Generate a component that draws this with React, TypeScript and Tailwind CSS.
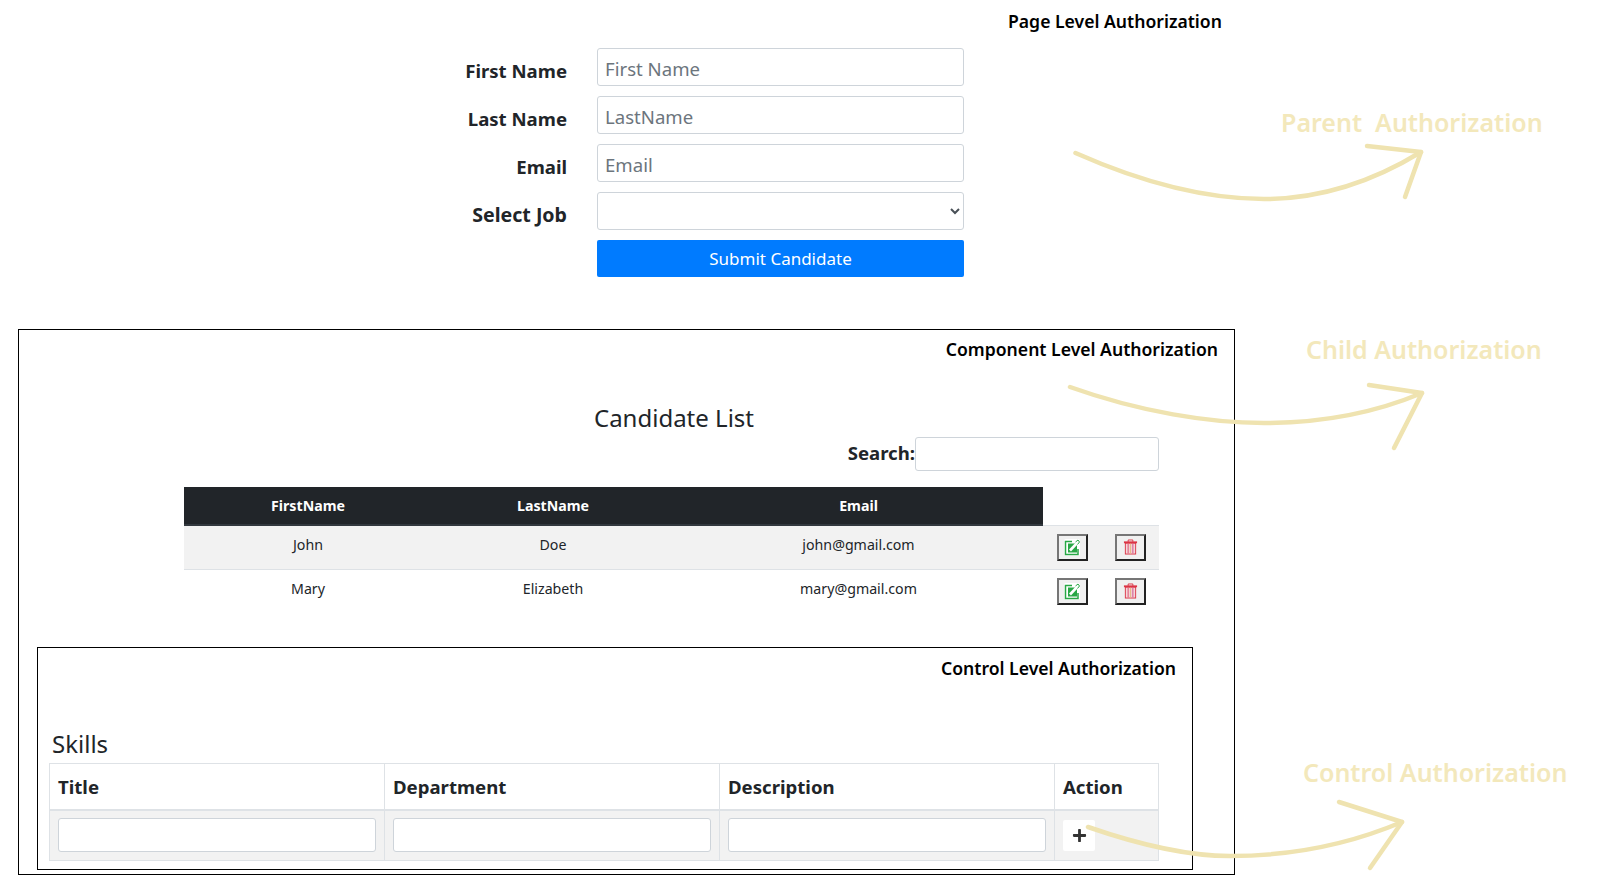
import { FaPlus } from "react-icons/fa";

const candidates = [
  { first: "John", last: "Doe", email: "john@gmail.com" },
  { first: "Mary", last: "Elizabeth", email: "mary@gmail.com" },
];

const formRows = [
  { label: "First Name", placeholder: "First Name" },
  { label: "Last Name", placeholder: "LastName" },
  { label: "Email", placeholder: "Email" },
];

const inputClass =
  "h-[38px] w-[367px] rounded-[3px] border border-[#ced4da] bg-white pt-[3px] pr-2 pl-[7px] text-[18.6px] text-[#495057] placeholder:text-[#6c757d]";

const labelClass = "h-[38px] w-[567px] pt-[4px] text-right text-[18.6px] leading-[38px] font-bold";

function ActionButton({ children }: { children: React.ReactNode }) {
  return (
    <button className="flex h-[27px] w-[31px] items-center justify-center border-2 border-t-[#767676] border-r-[#222] border-b-[#222] border-l-[#767676] bg-[#f0f0f0]">
      {children}
    </button>
  );
}

function EditIcon() {
  return (
    <svg width="17" height="17" viewBox="0 0 17 17" fill="none">
      <rect x="0" y="0" width="16" height="17" rx="2" fill="#fff" />
      <path d="M8 2.5 H1.5 V15.5 H14 V10" stroke="#28a745" strokeWidth="1.5" />
      <rect x="4" y="4.5" width="9" height="9" fill="#28a745" />
      <path d="M6 11.5 L14 3" stroke="#fff" strokeWidth="2.6" />
      <path d="M11.5 3 L14 1 L15.5 3 L13.5 5.5" stroke="#28a745" strokeWidth="1" />
    </svg>
  );
}

function TrashIcon() {
  return (
    <svg width="15" height="16" viewBox="0 0 16 17" fill="none">
      <path d="M5.5 3 V1 H10.5 V3" stroke="#dc3545" strokeWidth="1" />
      <rect x="1" y="2.5" width="14" height="2" fill="#dc3545" />
      <rect x="2.5" y="4.5" width="11" height="11.5" stroke="#dc3545" strokeWidth="1" fill="#f5d6da" />
      <path d="M5.5 5 V15.5" stroke="#e0708a" strokeWidth="1.4" />
      <path d="M8 5 V15.5" stroke="#e8b98a" strokeWidth="1.4" />
      <path d="M10.5 5 V15.5" stroke="#d873a0" strokeWidth="1.4" />
    </svg>
  );
}

function Arrows() {
  // hand drawn annotation arrows over the page
  return (
    <svg className="pointer-events-none absolute top-0 left-0" width="1611" height="885" fill="none" stroke="#efe3b0" strokeWidth="4.5" strokeLinecap="round" strokeLinejoin="round">
      <path d="M1075.5 153 C1150 186 1210 199 1264 199 C1320 199 1372 182 1421 152" />
      <path d="M1367 146 L1421 152 L1405 197" />
      <path d="M1070 387 C1140 412 1210 423 1264 423 C1320 423 1372 414 1422 393" />
      <path d="M1369 385 L1422 393 L1394 448" />
      <path d="M1088 827 C1140 845 1190 856 1230 856 C1290 856 1350 844 1402 822" />
      <path d="M1339 802 L1402 822 L1370 868" />
    </svg>
  );
}

export default function App() {
  return (
    <div className="relative h-[885px] w-[1611px] overflow-hidden bg-white font-['Noto_Sans',sans-serif] text-[#212529]">
      {/* Page level form */}
      <div className="pt-[9px]">
        <div className="ml-[1008px] text-[17.6px] leading-[24px] font-semibold whitespace-nowrap text-black">Page Level Authorization</div>
        <div className="mt-[15px] flex flex-col gap-[10px]">
          {formRows.map((row) => (
            <div key={row.label} className="flex h-[38px]">
              <label className={labelClass}>{row.label}</label>
              <input className={`ml-[30px] ${inputClass}`} placeholder={row.placeholder} />
            </div>
          ))}
          <div className="flex h-[38px]">
            <label className="h-[38px] w-[567px] pt-[4px] text-right text-[19.6px] leading-[38px] font-bold">Select Job</label>
            <select className={`ml-[30px] ${inputClass}`}></select>
          </div>
          <div className="flex">
            <button className="ml-[597px] h-[37px] w-[367px] rounded-[2px] bg-[#007bff] text-[17px] text-white">Submit Candidate</button>
          </div>
        </div>
      </div>

      {/* Component level */}
      <div className="mt-[52px] ml-[18px] h-[546px] w-[1217px] border border-black">
        <div className="pt-[7px] pr-[16px] text-right text-[17.6px] leading-[24px] font-semibold text-black">Component Level Authorization</div>
        <div className="mt-[39px] ml-[165px] w-[975px]">
          <div className="pl-[5px] text-center text-[24px] leading-[36px]">Candidate List</div>
          <div className="mt-[1px] flex items-center justify-end">
            <label className="pb-[2px] text-[18.6px] font-bold">Search:</label>
            <input className="h-[34px] w-[244px] rounded-[3px] border border-[#ced4da] bg-white" />
          </div>
          <table className="mt-[16px] w-[975px] table-fixed border-collapse text-center text-[14.2px]">
            <colgroup>
              <col className="w-[248px]" />
              <col className="w-[242px]" />
              <col className="w-[369px]" />
              <col className="w-[58px]" />
              <col className="w-[58px]" />
            </colgroup>
            <thead>
              <tr className="h-[38px]">
                {["FirstName", "LastName", "Email"].map((h) => (
                  <th key={h} className="border-b-2 border-[#32383e] bg-[#212529] font-bold text-white">{h}</th>
                ))}
                <th colSpan={2} className="border-b border-[#dee2e6]"></th>
              </tr>
            </thead>
            <tbody>
              {candidates.map((c, i) => (
                <tr key={c.email} className={i === 0 ? "h-[44px] border-b border-[#dee2e6] bg-[#f2f2f2]" : "h-[44px]"}>
                  <td className="pb-[5px]">{c.first}</td>
                  <td className="pb-[5px]">{c.last}</td>
                  <td className="pb-[5px]">{c.email}</td>
                  <td>
                    <div className="flex justify-center pl-[1px]">
                      <ActionButton>
                        <EditIcon />
                      </ActionButton>
                    </div>
                  </td>
                  <td>
                    <div className="flex justify-center pl-[1px]">
                      <ActionButton>
                        <TrashIcon />
                      </ActionButton>
                    </div>
                  </td>
                </tr>
              ))}
            </tbody>
          </table>
        </div>

        {/* Control level */}
        <div className="mt-[34px] ml-[18px] h-[223px] w-[1156px] border border-black">
          <div className="pt-[8px] pr-[16px] text-right text-[17.6px] leading-[24px] font-semibold text-black">Control Level Authorization</div>
          <div className="mt-[46px] ml-[14px] text-[24px] leading-[36px]">Skills</div>
          <table className="mt-[1px] ml-[11px] w-[1109px] table-fixed border-collapse text-left text-[18.6px]">
            <colgroup>
              <col className="w-[335px]" />
              <col className="w-[335px]" />
              <col className="w-[335px]" />
              <col className="w-[104px]" />
            </colgroup>
            <thead>
              <tr className="h-[46px]">
                {["Title", "Department", "Description", "Action"].map((h) => (
                  <th key={h} className="border border-b-2 border-[#dee2e6] px-2 pt-[2px] font-bold">{h}</th>
                ))}
              </tr>
            </thead>
            <tbody>
              <tr className="h-[51px] bg-[#f2f2f2]">
                {[0, 1, 2].map((n) => (
                  <td key={n} className="border border-[#dee2e6] px-2">
                    <input className="block h-[34px] w-[318px] rounded-[3px] border border-[#ced4da] bg-white" />
                  </td>
                ))}
                <td className="border border-[#dee2e6] px-2">
                  <button className="flex h-[31px] w-[32px] items-center justify-center rounded-[2px] bg-white text-[#333]">
                    <FaPlus size={15} />
                  </button>
                </td>
              </tr>
            </tbody>
          </table>
        </div>
      </div>

      {/* Annotations */}
      <div className="absolute top-[104px] left-[1281px] text-[25px] leading-[36px] font-semibold whitespace-pre text-[#f3e8bb]">Parent  Authorization</div>
      <div className="absolute top-[331px] left-[1306px] text-[25px] leading-[36px] font-semibold whitespace-nowrap text-[#f3e8bb]">Child Authorization</div>
      <div className="absolute top-[754px] left-[1303px] text-[25px] leading-[36px] font-semibold whitespace-nowrap text-[#f3e8bb]">Control Authorization</div>
      <Arrows />
    </div>
  );
}
